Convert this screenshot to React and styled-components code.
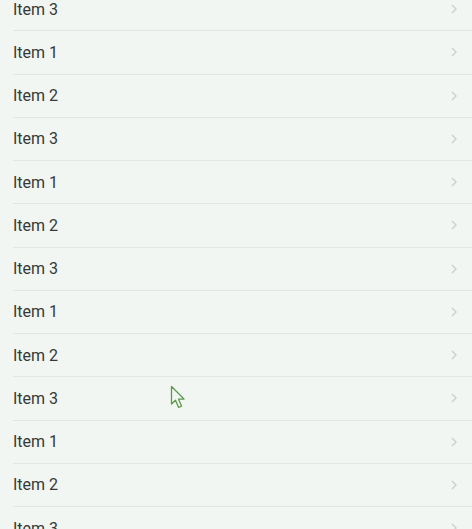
import React from "react";
import styled, { createGlobalStyle } from "styled-components";

const Global = createGlobalStyle`
  html, body { margin: 0; padding: 0; background: #f2f6f2; overflow: hidden; }
  body { font-family: Roboto, "Noto Sans", "Liberation Sans", sans-serif; }
`;

const Screen = styled.div`
  position: relative;
  width: 472px;
  height: 529px;
  overflow: hidden;
  background: #f2f6f2;
`;

const List = styled.ul`
  list-style: none;
  margin: -12px 0 0 0;
  padding: 0 0 0 13px;
`;

const Row = styled.li`
  display: flex;
  align-items: center;
  justify-content: space-between;
  height: 42.25px;
  border-bottom: 1px solid #e1e6e1;
  padding-right: 14px;
`;

const Label = styled.span`
  font-size: 16px;
  color: #363936;
`;

const Chevron = styled.svg`
  width: 8px;
  height: 12px;
  flex: none;
`;

const Cursor = styled.svg`
  position: absolute;
  left: 170px;
  top: 385px;
  width: 18px;
  height: 26px;
`;

const labels = ["Item 3", "Item 1", "Item 2"];

export default function App() {
  const rows = Array.from({ length: 13 }, (_, i) => labels[i % 3]);
  return (
    <Screen>
      <Global />
      <List>
        {rows.map((t, i) => (
          <Row key={i}>
            <Label>{t}</Label>
            <Chevron viewBox="0 0 8 12">
              <path d="M2 2 L6 6 L2 10" fill="none" stroke="#cdd1cd" strokeWidth="1.4" />
            </Chevron>
          </Row>
        ))}
      </List>
      <Cursor viewBox="0 0 18 26">
        <path
          d="M1.5 1.5 L1.5 19 L5.5 15.2 L8.6 22.5 L11.6 21.2 L8.6 14.2 L14 14 Z"
          fill="#f2f6f2"
          stroke="#5d9a4c"
          strokeWidth="1.3"
          strokeLinejoin="round"
        />
      </Cursor>
    </Screen>
  );
}
